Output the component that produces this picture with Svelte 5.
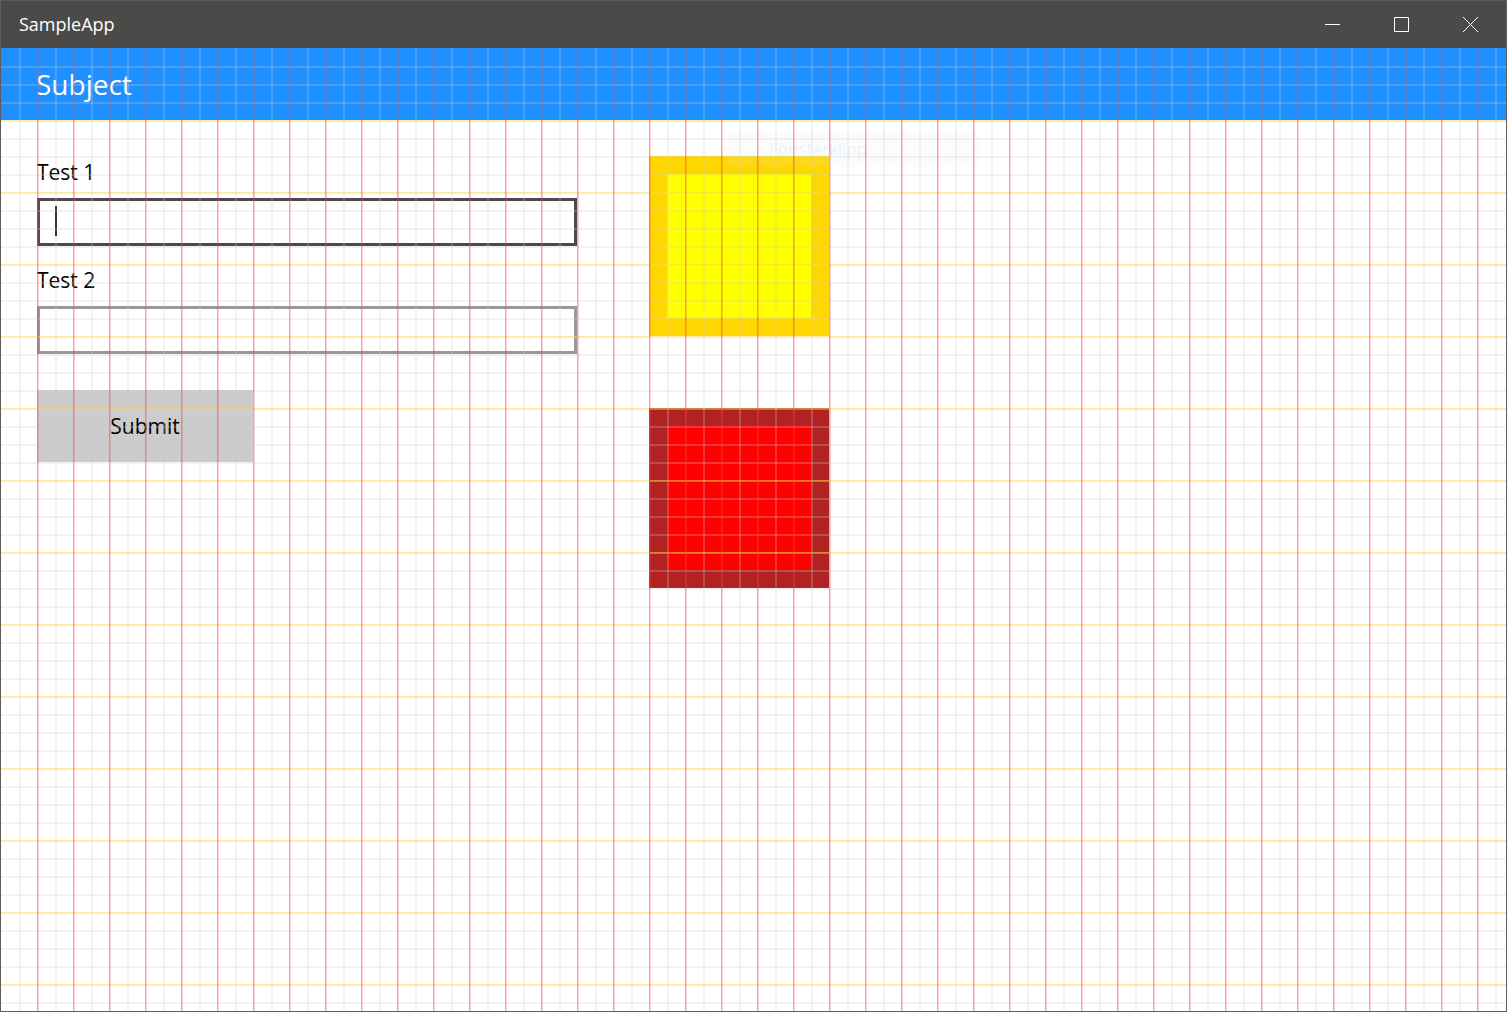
<script>
  let first = $state('');
  let second = $state('');
  const swatches = ['yellow', 'red'];
</script>

<div class="window">
  <header class="titlebar">
    <span class="app-name">SampleApp</span>
    <div class="controls">
      <button aria-label="Minimize"><svg viewBox="0 0 15 15"><path d="M0 7.5H15" /></svg></button>
      <button aria-label="Maximize"><svg viewBox="0 0 15 15"><path d="M.5 .5H14.5V14.5H.5Z" /></svg></button>
      <button aria-label="Close"><svg viewBox="0 0 15 15"><path d="M0 0L15 15M15 0L0 15" /></svg></button>
    </div>
  </header>

  <main class="page">
    <h1>Subject</h1>
    <div class="content">
      <form onsubmit={(e) => e.preventDefault()}>
        <label for="test1">Test 1</label>
        <input id="test1" class="active" type="text" bind:value={first} />
        <label for="test2">Test 2</label>
        <input id="test2" type="text" bind:value={second} />
        <button class="submit" type="submit">Submit</button>
      </form>
      <div class="swatches">
        {#each swatches as name}
          <div class="swatch {name}"></div>
        {/each}
      </div>
      <div class="toast">Fönsterklipp</div>
    </div>
    <div class="grid" aria-hidden="true"></div>
  </main>
</div>

<style>
  :global(body) {
    margin: 0;
    font-family: 'Open Sans', 'Noto Sans', sans-serif;
  }
  .window {
    box-sizing: border-box;
    min-height: 100vh;
    display: flex;
    flex-direction: column;
    border: 1px solid #5c5c5a;
    background: #fff;
  }
  .titlebar {
    display: flex;
    align-items: center;
    height: 47px;
    padding: 0 1px 0 18px;
    background: #4c4a48;
    color: #fff;
  }
  .app-name {
    flex: 1;
    padding-bottom: 2px;
    font-size: 18px;
    line-height: 24px;
  }
  .controls {
    display: flex;
    height: 100%;
  }
  .controls button {
    display: flex;
    align-items: center;
    justify-content: center;
    width: 69px;
    padding: 0;
    border: 0;
    background: none;
  }
  .controls svg {
    width: 15px;
    height: 15px;
    fill: none;
    stroke: #fff;
  }
  .page {
    position: relative;
    flex: 1;
  }
  h1 {
    margin: 0;
    padding: 0 35px;
    background: #1e90ff;
    color: #fff;
    font-size: 28px;
    font-weight: 400;
    line-height: 72px;
  }
  .content {
    position: relative;
    display: flex;
    gap: 72px;
    padding: 36px;
  }
  form {
    display: flex;
    flex-direction: column;
    flex: 0 1 540px;
  }
  label {
    margin-bottom: 10px;
    font-size: 21px;
    line-height: 32px;
  }
  input {
    box-sizing: border-box;
    width: 100%;
    height: 48px;
    margin-bottom: 18px;
    padding: 0 15px;
    border: 3px solid #999;
    border-radius: 0;
    outline: 0;
    background: #fff;
    font: inherit;
    font-size: 21px;
  }
  input.active {
    border-color: #4c4a48;
    background: linear-gradient(#000, #000) 15px 5px / 2px 30px no-repeat #fff;
  }
  .submit {
    width: 216px;
    height: 72px;
    margin-top: 18px;
    padding: 0;
    border: 0;
    background: #ccc;
    color: #000;
    font: inherit;
    font-size: 21px;
  }
  .swatches {
    display: flex;
    flex-direction: column;
    gap: 72px;
  }
  .swatch {
    box-sizing: border-box;
    width: 180px;
    height: 180px;
    border: 18px solid;
  }
  .yellow {
    border-color: #ffd700;
    background: #ff0;
  }
  .red {
    border-color: #b22222;
    background: #f00;
  }
  .toast {
    position: absolute;
    top: 12px;
    left: 727px;
    width: 210px;
    padding: 2px 0 2px 41px;
    background: rgba(225, 232, 245, 0.12);
    color: rgba(150, 165, 190, 0.15);
    font-size: 17px;
    line-height: 30px;
  }
  .grid {
    --minor: rgba(205, 205, 205, 0.26);
    --row: rgba(240, 215, 80, 0.55);
    --row-soft: rgba(245, 222, 100, 0.4);
    position: absolute;
    inset: 0;
    pointer-events: none;
  }
  .grid::before,
  .grid::after {
    content: '';
    position: absolute;
  }
  /* horizontal lines */
  .grid::before {
    inset: 18px 0 0;
    background: linear-gradient(var(--minor) 2px, transparent 2px 18px, var(--minor) 18px 20px, transparent 20px 36px, var(--minor) 36px 38px, transparent 38px 54px, var(--row) 54px 55px, var(--row-soft) 55px 56px, transparent 56px) 0 0 / 100% 72px;
  }
  /* vertical lines */
  .grid::after {
    inset: 0 0 0 18px;
    background: linear-gradient(90deg, var(--minor) 2px, transparent 2px 18px, rgba(229, 70, 70, 0.48) 18px 19px, rgba(240, 80, 80, 0.28) 19px 20px, transparent 20px) 0 0 / 36px 100%;
  }
</style>
